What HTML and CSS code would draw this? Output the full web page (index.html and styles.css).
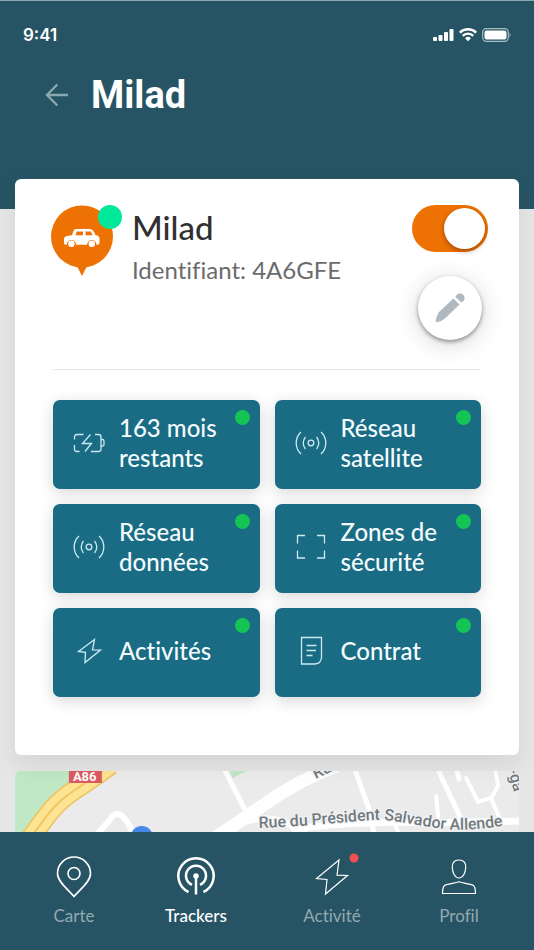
FILE: index.html
```html
<!DOCTYPE html>
<html lang="fr">
<head>
<meta charset="utf-8">
<meta name="viewport" content="width=device-width, initial-scale=1">
<title>Milad</title>
<link rel="stylesheet" href="styles.css">
</head>
<body>
<header class="header">
  <div class="status">
    <span class="time">9:41</span>
    <svg class="status-icons" width="78" height="16" viewBox="0 0 78 16" aria-hidden="true">
      <g fill="#fff">
        <rect x="0" y="10" width="4" height="4" rx="1"/>
        <rect x="5.500" y="8" width="4" height="6" rx="1"/>
        <rect x="11" y="5" width="4" height="9" rx="1"/>
        <rect x="16.500" y="2" width="4" height="12" rx="1"/>
        <path d="M35 14.300l3-3.100a4.300 4.300 0 0 0-6 0z"/>
      </g>
      <g fill="none" stroke="#fff" stroke-width="2.300">
        <path d="M26.800 5.600a11.700 11.700 0 0 1 16.400 0"/>
        <path d="M29.700 8.900a7.500 7.500 0 0 1 10.600 0"/>
      </g>
      <rect x="49.700" y="1.700" width="25.600" height="12.600" rx="3.600" fill="none" stroke="#a9bcc3" stroke-width="1.200"/>
      <rect x="51.500" y="3.500" width="22" height="9" rx="2" fill="#fff"/>
      <path d="M76.500 6v4c1.600-.6 1.600-3.400 0-4z" fill="#8fa8b0"/>
    </svg>
  </div>
  <div class="title-row">
    <button class="back" type="button" aria-label="Retour">
      <svg width="24" height="24" viewBox="0 0 24 24" fill="none" stroke="#8ba7af" stroke-width="2.300"><path d="M23 12H2M12.300 1.500L2 12l10.300 10.500"/></svg>
    </button>
    <h1 class="title">Milad</h1>
  </div>
</header>

<main class="main">
  <section class="card">
    <div class="identity">
      <svg class="pin" width="72" height="72" viewBox="0 0 72 72" aria-hidden="true">
        <circle cx="31" cy="31.500" r="31" fill="#ee7203"/>
        <path fill="#ee7203" d="M23 60q3 .5 4.500 4L31 71l3.500-7q1.500-3.500 4.500-4z"/>
        <path fill="#fff" fill-rule="evenodd" d="M24.500 24h14q3 0 4.500 2.800l1.500 3.200q4 .7 4 3.700v4q0 2-2 2h-1a4.700 4.700 0 0 0-9.400 0H25.100a4.700 4.700 0 0 0-9.400 0H15q-2 0-2-2v-3.700q0-2.500 3-3l5-.8 1.500-4.200q.6-2 2-2zM25.800 26.500l-1.300 3.800h7.500v-3.800zM34.500 26.500v3.800h7l-1.600-3.800z"/>
        <circle cx="20.400" cy="38.800" r="3.200" fill="#fff"/><circle cx="40.800" cy="38.800" r="3.200" fill="#fff"/>
        <circle cx="59" cy="12" r="12" fill="#00e99a"/>
      </svg>
      <div class="who">
        <h2 class="name">Milad</h2>
        <p class="ident">Identifiant: 4A6GFE</p>
      </div>
      <div class="actions">
        <input class="switch" type="checkbox" role="switch" aria-label="Tracker actif" checked>
        <button class="edit" type="button" aria-label="Modifier">
          <svg width="30" height="30" viewBox="0 0 30 30" fill="#afb9bf"><path d="M1 29c-1-1 1-7 3-10L18.500 5.500l6 6L10.500 25c-3 2.500-8 5-9.500 4z"/><path d="M20.300 4C21.500.500 26-.500 28.300 2s1.300 6-1.900 7.500z"/></svg>
        </button>
      </div>
    </div>
    <div class="tiles">
      <button class="tile" type="button">
        <svg class="tile-icon" width="32" height="32" viewBox="0 0 32 32"><path d="M10.500 7.500H4Q1.500 7.500 1.500 10v2.500M1.500 18v4q0 2.500 2.500 2.500h2.500M22 7.500h3.500q2.500 0 2.500 2.500v12q0 2.500-2.500 2.500H18M28 12.500h1.500q1.500 0 1.500 1.500v3.500q0 1.500-1.500 1.500H28M17.500 7.500L9.500 16.500h9L12 24.500"/></svg>
        <span>163 mois restants</span><i class="dot"></i>
      </button>
      <button class="tile" type="button">
        <svg class="tile-icon" width="32" height="32" viewBox="0 0 32 32"><circle cx="16" cy="16" r="2.800"/><path d="M10.500 10a9 9 0 0 0 0 12M21.500 10a9 9 0 0 1 0 12M6 5a15 15 0 0 0 0 22M26 5a15 15 0 0 1 0 22"/></svg>
        <span>Réseau satellite</span><i class="dot"></i>
      </button>
      <button class="tile" type="button">
        <svg class="tile-icon" width="32" height="32" viewBox="0 0 32 32"><circle cx="16" cy="16" r="2.800"/><path d="M10.500 10a9 9 0 0 0 0 12M21.500 10a9 9 0 0 1 0 12M6 5a15 15 0 0 0 0 22M26 5a15 15 0 0 1 0 22"/></svg>
        <span>Réseau données</span><i class="dot"></i>
      </button>
      <button class="tile" type="button">
        <svg class="tile-icon" width="32" height="32" viewBox="0 0 32 32"><path d="M2.500 12.500v-8h7.500M22 4.500h7.500v8M29.500 19.500v7.500H22M10 27H2.500v-7.500"/></svg>
        <span>Zones de sécurité</span><i class="dot"></i>
      </button>
      <button class="tile" type="button">
        <svg class="tile-icon" width="32" height="32" viewBox="0 0 32 32"><path d="M21.500 4.500L5.500 16.500l7 .8L12 27.500l15.500-12.500-8-.2z"/></svg>
        <span>Activités</span><i class="dot"></i>
      </button>
      <button class="tile" type="button">
        <svg class="tile-icon" width="32" height="32" viewBox="0 0 32 32"><path d="M6.500 2.500h20v20q-.5 6-6.500 6.500H6.500zM11.500 10.500h10M11.500 15.500H21M11.500 20.500h6"/></svg>
        <span>Contrat</span><i class="dot"></i>
      </button>
    </div>
  </section>

  <section class="map" aria-label="Carte">
    <svg class="map-art" viewBox="0 0 505 61" preserveAspectRatio="xMinYMin slice">
      <rect width="505" height="61" fill="#ebebec"/>
      <path d="M0 0h90L9 61H0z" fill="#c1e8c4"/>
      <path d="M215 0h17l-14 7z" fill="#c1e8c4"/>
      <g fill="none">
        <path d="M15 68C33 43 40 32 60 19C72 11 84 3 96-6" stroke="#eec25d" stroke-width="20"/>
        <path d="M15 68C33 43 40 32 60 19C72 11 84 3 96-6" stroke="#fde493" stroke-width="17"/>
        <path d="M15 68C33 43 40 32 60 19C72 11 84 3 96-6" stroke="#f2c560" stroke-width="2"/>
      </g>
      <g fill="none" stroke="#fff" stroke-linecap="round" stroke-linejoin="round">
        <path d="M82 64L95 49Q102 37 111 49L120 64" stroke-width="6"/>
        <path d="M196 70L252 32Q285 9 322-5" stroke-width="13"/>
        <path d="M209-3L232 42M340-3L355 39L360 64" stroke-width="5"/>
        <path d="M228 51Q255 43 280 56M280 58Q350 49 412 52L510 50" stroke-width="7"/>
        <path d="M423-3L446 46M442-3L445 8" stroke-width="5"/>
        <path d="M452 7L464 31L477 27L484 15L481-3M477 27L485 46M422 25L424 46M380 52L385 64M288 55L292 64" stroke-width="4"/>
      </g>
      <circle cx="127" cy="66" r="11" fill="#4589e8"/>
      <rect x="54" y="-4" width="33" height="16" fill="#dc5a60"/>
      <text class="route" x="58" y="10">A86</text>
      <path id="street" d="M244 57C290 56 330 51 362 49C385 49 400 55 430 58C450 60 470 58 495 54" fill="none"/>
      <text class="street"><textPath href="#street">Rue du Président Salvador Allende</textPath></text>
      <text class="street" transform="translate(301 8) rotate(-25)">Ru</text>
      <text class="street" transform="translate(494 -1) rotate(75)">-ga</text>
    </svg>
  </section>
</main>

<nav class="nav" aria-label="Navigation principale">
  <a class="nav-item" href="#carte">
    <svg width="44" height="44" viewBox="0 0 44 44"><path d="M22 41.500C17 35.500 5.500 27 5.500 18.500a16.500 16.500 0 0 1 33 0C38.500 27 27 35.500 22 41.500z"/><circle cx="22" cy="18.500" r="6"/></svg>
    <span>Carte</span>
  </a>
  <a class="nav-item current" href="#trackers" aria-current="page">
    <svg width="44" height="44" viewBox="0 0 44 44"><path d="M14.500 37A17.700 17.700 0 1 1 29.500 37M18 29.800a10 10 0 1 1 8 0M22 20v19.500"/><circle cx="22" cy="21" r="1.500" fill="#fff"/></svg>
    <span>Trackers</span>
  </a>
  <a class="nav-item thin" href="#activite">
    <svg width="44" height="44" viewBox="0 0 44 44"><path d="M29 5L6.500 23.500l10.500 1L15.500 39l22-18.500-10.500-.3z"/><circle class="alert" cx="44" cy="3" r="4.500"/></svg>
    <span>Activité</span>
  </a>
  <a class="nav-item thin" href="#profil">
    <svg width="44" height="44" viewBox="0 0 44 44"><path d="M22 5c5 0 7 3 6.700 7.500C28.500 18 26 23 22 23s-6.500-5-6.700-10.500C15 8 17 5 22 5zM5.500 38.500c.2-6 .8-8 4-8.800C14 28.500 18 28 22 26.800c4 1.200 8 1.700 12.500 2.900 3.200.8 3.800 2.800 4 8.800z"/></svg>
    <span>Profil</span>
  </a>
</nav>
</body>
</html>
```
FILE: styles.css
```css
* {
  box-sizing: border-box;
}

body {
  margin: 0;
  min-height: 100vh;
  display: flex;
  flex-direction: column;
  background: #e6e6e6;
  font-family: Lato, "Open Sans", sans-serif;
  font-variant-ligatures: none;
}

h1, h2, p {
  margin: 0;
}

button {
  margin: 0;
  padding: 0;
  border: 0;
  background: none;
  font: inherit;
  color: inherit;
  cursor: pointer;
}

svg {
  display: block;
  flex: none;
  overflow: visible;
}

.header {
  padding: 20px 23px 90px;
  border-top: 1px solid #8ca9b1;
  background: #275464;
  color: #fff;
}

.status {
  display: flex;
  justify-content: space-between;
  align-items: center;
  height: 28px;
}

.time {
  font: 600 17px/28px Inter, sans-serif;
}

.title-row {
  display: flex;
  align-items: center;
  gap: 22px;
  padding: 22px 0 0 22px;
}

.title {
  font: 700 38px/48px Roboto, sans-serif;
}

.main {
  flex: 1;
  display: flex;
  flex-direction: column;
  gap: 16px;
  padding: 0 15px;
}

.card {
  position: relative;
  margin-top: -30px;
  padding: 26px 38px 58px;
  border-radius: 6px;
  background: #fff;
  box-shadow: 0 10px 24px rgba(0, 0, 0, 0.08);
}

.identity {
  display: flex;
  align-items: flex-start;
  gap: 9px;
  margin: 0 -7px 0 -2px;
}

.who {
  flex: 1;
}

.name {
  font-size: 33px;
  font-weight: 500;
  line-height: 44px;
  color: #303030;
}

.ident {
  font-size: 24px;
  line-height: 42px;
  color: #6b6b6b;
}

.actions {
  display: flex;
  flex-direction: column;
  align-items: center;
  gap: 24px;
}

.switch {
  appearance: none;
  width: 76px;
  height: 47px;
  margin: 0;
  padding: 3px;
  display: flex;
  justify-content: flex-end;
  border-radius: 24px;
  background: #ee7203;
}

.switch::before {
  content: "";
  width: 41px;
  height: 41px;
  border-radius: 50%;
  background: #fff;
  box-shadow: 0 2px 5px rgba(90, 30, 0, 0.5);
}

.edit {
  display: grid;
  place-items: center;
  width: 64px;
  height: 64px;
  border-radius: 50%;
  background: #fff;
  box-shadow: 0 2px 4px rgba(0, 0, 0, 0.4), 0 4px 24px rgba(0, 0, 0, 0.16);
}

.tiles {
  display: grid;
  grid-template-columns: 1fr 1fr;
  gap: 15px;
  margin-top: 29px;
  padding-top: 30px;
  border-top: 1px solid #e8e8e8;
}

.tile {
  position: relative;
  display: flex;
  align-items: center;
  gap: 14px;
  height: 89px;
  padding: 0 34px 4px 20px;
  border-radius: 7px;
  background: #196c83;
  box-shadow: 0 4px 16px rgba(0, 0, 0, 0.16);
  color: #f4fbff;
  font-size: 24px;
  font-weight: 500;
  line-height: 30px;
  text-align: left;
}

.tile-icon {
  fill: none;
  stroke: #cdeaf3;
  stroke-width: 1.300;
}

.dot {
  position: absolute;
  top: 10px;
  right: 10px;
  width: 15px;
  height: 15px;
  border-radius: 50%;
  background: #14c454;
}

.map {
  flex: 1;
  min-height: 60px;
  overflow: hidden;
  border-radius: 6px 6px 0 0;
}

.map-art {
  width: 100%;
  height: 100%;
  overflow: hidden;
}

.route {
  font: 700 13px Roboto, sans-serif;
  fill: #fff;
}

.street {
  font: 500 16px Roboto, sans-serif;
  fill: #707a80;
  stroke: #f4f4f4;
  stroke-width: 2px;
  paint-order: stroke;
}

.nav {
  position: sticky;
  bottom: 0;
  display: grid;
  grid-template-columns: 122fr 122fr 150fr 104fr;
  padding: 23px 23px 23px 13px;
  background: #275464;
}

.nav-item {
  display: flex;
  flex-direction: column;
  align-items: center;
  gap: 5px;
  color: #93aab2;
  font-size: 17px;
  line-height: 24px;
  text-decoration: none;
}

.nav-item svg {
  fill: none;
  stroke: #fff;
  stroke-width: 1.600;
}

.nav-item.thin svg {
  stroke-width: 1.200;
}

.nav-item.current svg {
  stroke-width: 2.500;
}

.nav-item.current {
  color: #fff;
  font-weight: 500;
}

.nav-item .alert {
  fill: #f0504f;
  stroke: none;
}
```
